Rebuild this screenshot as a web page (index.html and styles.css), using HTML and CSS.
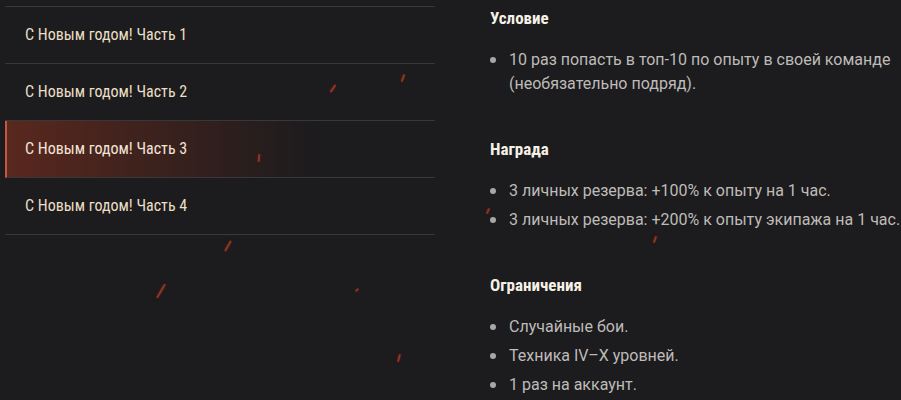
FILE: index.html
```html
<!DOCTYPE html>
<html lang="ru">
<head>
<meta charset="UTF-8">
<meta name="viewport" content="width=device-width, initial-scale=1.0">
<title>С Новым годом!</title>
<link rel="stylesheet" href="styles.css">
</head>
<body>

<div class="sparks">
    <span class="spark" style="left:402px;top:74px;height:8px;transform:rotate(20deg)"></span>
    <span class="spark" style="left:332px;top:84px;height:9px;transform:rotate(35deg)"></span>
    <span class="spark" style="left:258px;top:154px;height:8px;transform:rotate(5deg)"></span>
    <span class="spark" style="left:227px;top:240px;height:12px;transform:rotate(30deg)"></span>
    <span class="spark" style="left:160px;top:283px;height:16px;transform:rotate(30deg)"></span>
    <span class="spark" style="left:356px;top:288px;height:4px;transform:rotate(50deg)"></span>
    <span class="spark" style="left:398px;top:354px;height:8px;transform:rotate(15deg)"></span>
    <span class="spark" style="left:487px;top:208px;height:6px;transform:rotate(25deg)"></span>
    <span class="spark" style="left:654px;top:236px;height:7px;transform:rotate(20deg)"></span>
</div>

<div class="page">
    <ul class="menu">
        <li class="menu-item">С Новым годом! Часть 1</li>
        <li class="menu-item">С Новым годом! Часть 2</li>
        <li class="menu-item active">С Новым годом! Часть 3</li>
        <li class="menu-item">С Новым годом! Часть 4</li>
    </ul>

    <div class="details">
        <div class="block">
            <h3>Условие</h3>
            <ul class="points">
                <li>10 раз попасть в топ-10 по опыту в своей команде (необязательно подряд).</li>
            </ul>
        </div>
        <div class="block">
            <h3>Награда</h3>
            <ul class="points">
                <li>3 личных резерва: +100% к опыту на 1 час.</li>
                <li>3 личных резерва: +200% к опыту экипажа на 1 час.</li>
            </ul>
        </div>
        <div class="block">
            <h3>Ограничения</h3>
            <ul class="points">
                <li>Случайные бои.</li>
                <li>Техника IV–X уровней.</li>
                <li>1 раз на аккаунт.</li>
            </ul>
        </div>
    </div>
</div>

</body>
</html>
```

FILE: styles.css
```css
body {
    margin: 0;
    height: 400px;
    background-color: #1c1b1e;
    font-family: Roboto, "Liberation Sans", sans-serif;
    overflow: hidden;
}
.page {
    display: flex;
    padding-top: 6px;
}
.menu {
    list-style: none;
    margin: 0 0 0 5px;
    padding: 0;
    width: 430px;
    flex-shrink: 0;
    border-top: 1px solid #38373a;
}
.menu-item {
    height: 56px;
    line-height: 56px;
    padding-left: 20px;
    border-bottom: 1px solid #38373a;
    color: #e9dfc4;
    font-size: 16px;
    font-stretch: 80%;
}
.menu-item.active {
    padding-left: 18px;
    border-left: 2px solid #c05a3e;
    color: #f3e4d8;
    background: linear-gradient(90deg, rgba(100, 42, 30, 0.85) 0%, rgba(80, 38, 28, 0.6) 35%, rgba(28, 27, 30, 0) 72%);
}
.details {
    margin-left: 55px;
}
.block {
    margin-bottom: 41px;
}
.block h3 {
    margin: 0;
    line-height: 24px;
    font-size: 17px;
    font-weight: 700;
    font-stretch: 85%;
    color: #f6f1e6;
}
.points {
    list-style: none;
    margin: 18px 0 0;
    padding: 0;
}
.points li {
    display: flex;
    line-height: 24px;
    margin-bottom: 5px;
    font-size: 16px;
    color: #bebcb8;
}
.points li::before {
    content: "";
    flex-shrink: 0;
    width: 6px;
    height: 6px;
    margin: 9px 13px 0 0;
    border-radius: 50%;
    background-color: #a9a7a4;
}
.sparks {
    position: absolute;
    top: 0;
    left: 0;
}
.spark {
    position: absolute;
    width: 2px;
    border-radius: 1px;
    background-color: #8f3522;
    box-shadow: 0 0 3px rgba(150, 50, 30, 0.5);
}
```
